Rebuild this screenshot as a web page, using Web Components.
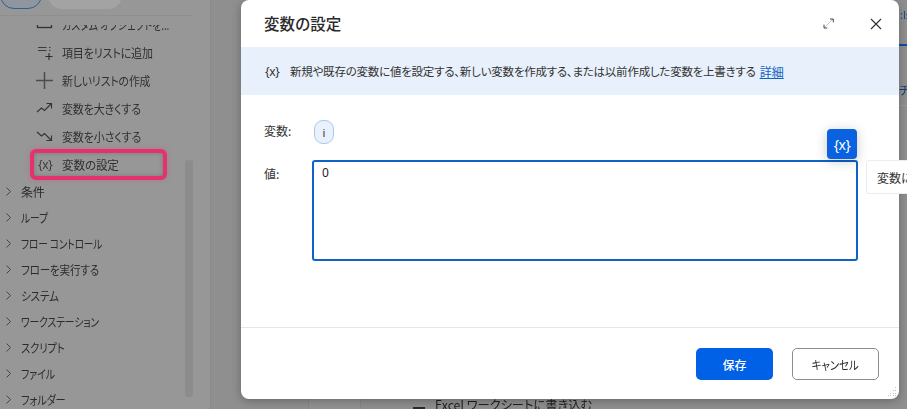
<!DOCTYPE html>
<html lang="ja">
<head>
<meta charset="utf-8">
<title>変数の設定</title>
<style>
html,body{margin:0;padding:0;width:907px;height:409px;overflow:hidden;background:#8f8f8f}
body{font-family:"Noto Sans CJK JP","Noto Sans",sans-serif;font-feature-settings:"palt";color:#2b2b2b}
</style>
</head>
<body>
<x-app>
  <x-sidebar slot="side">
    <x-action icon="obj" style="--sx:.84">カスタム オブジェクトを...</x-action>
    <x-action icon="add" style="--sx:.92">項目をリストに追加</x-action>
    <x-action icon="plus" style="--sx:.91">新しいリストの作成</x-action>
    <x-action icon="up" style="--sx:.92">変数を大きくする</x-action>
    <x-action icon="down" style="--sx:.92">変数を小さくする</x-action>
    <x-action icon="x" highlight style="--sx:.97">変数の設定</x-action>
    <x-category>条件</x-category>
    <x-category style="--sx:.82">ループ</x-category>
    <x-category style="--sx:.81">フロー コントロール</x-category>
    <x-category style="--sx:.88">フローを実行する</x-category>
    <x-category style="--sx:.88">システム</x-category>
    <x-category style="--sx:.82">ワークステーション</x-category>
    <x-category style="--sx:.86">スクリプト</x-category>
    <x-category style="--sx:.83">ファイル</x-category>
    <x-category style="--sx:.85">フォルダー</x-category>
  </x-sidebar>
  <x-canvas slot="main"></x-canvas>
  <x-dialog slot="dialog" heading="変数の設定">
    <x-banner slot="banner">新規や既存の変数に値を設定する、新しい変数を作成する、または以前作成した変数を上書きする</x-banner>
    <x-field slot="body" label="変数:" kind="chip"><x-chip>i</x-chip></x-field>
    <x-field slot="body" label="値:" kind="area"><x-area>0</x-area></x-field>
    <x-button slot="footer" primary>保存</x-button>
    <x-button slot="footer" style="--sx:.87">キャンセル</x-button>
  </x-dialog>
</x-app>
<script>
function def(name, css, html, init){
  customElements.define(name, class extends HTMLElement{
    connectedCallback(){
      if(this.shadowRoot) return;
      const r=this.attachShadow({mode:'open'});
      r.innerHTML='<style>'+css+'</style>'+(typeof html==='function'?html(this):html);
      if(init) init(this,r);
    }
  });
}
const ICONS={
 obj:'<rect x="1.5" y="1.5" width="14" height="10" fill="none" stroke="#333" stroke-width="1.3"/><path d="M4 4.5h3M4 7h3M9.500 4.500h3M9.500 7h3" stroke="#333" fill="none"/>',
 add:'<path d="M2 3.500h8.500M2 6.500h8.500M13 3.500h1.500M13 6.500h1.500" stroke="#3a3a3a" stroke-width="1.1" fill="none"/><path d="M13 9v7M9.500 12.500h7" stroke="#2b2b2b" stroke-width="1.1" fill="none"/>',
 plus:'<path d="M8.500 0v17M0 8.500h17" stroke="#4c4c4c" stroke-width="1.5" fill="none"/>',
 up:'<path d="M1 12l4.500-4 3 2.500L15 4M10.500 3.500h5v5" stroke="#333" stroke-width="1.1" fill="none"/>',
 down:'<path d="M1 4l4.500 4 3-2.500L15 12M10.500 12.500h5v-5" stroke="#333" stroke-width="1.1" fill="none"/>'
};
def('x-app',
 ':host{display:block;position:relative;width:907px;height:409px;overflow:hidden}.g{display:grid;grid-template-columns:211px 1fr;height:409px;filter:blur(.35px)}',
 '<div class="g"><slot name="side"></slot><slot name="main"></slot></div><slot name="dialog"></slot>');
def('x-sidebar',
 `:host{display:flex;flex-direction:column;height:409px;background:#979797;border-right:1px solid #8a8a8a;box-sizing:border-box;position:relative;overflow:hidden}
  .top{height:15px;flex:none;width:193px;border-bottom:1px solid #8f8f8f;display:flex;gap:6px;align-items:flex-end;box-sizing:content-box}
  .pill{height:25px;margin-top:-16px;border-radius:0 0 14px 14px;align-self:flex-start;box-sizing:border-box}
  .a{width:42px;border:1px solid #2e5f9e;background:#8f96a0}
  .b{width:74px;background:#a3a3a3;height:26px;margin-top:-17px}
  .list{margin-top:9px;height:384px;overflow:hidden;display:flex;flex-direction:column}
  .in{margin-top:-15px;display:flex;flex-direction:column}
  .sb{position:absolute;left:185px;top:160px;width:8px;height:237px;background:#8c8c8c;border-radius:3px}`,
 '<div class="top"><div class="pill a"></div><div class="pill b"></div></div><div class="list"><div class="in"><slot></slot></div></div><div class="sb"></div>');
def('x-action',
 `:host{display:flex;align-items:center;height:28px;padding-left:36px;font-size:12px;color:#303030;white-space:nowrap;position:relative;flex:none}
  .i{width:18px;height:17px;flex:none;margin-right:8px;display:flex;align-items:center;justify-content:flex-start}
  .i svg{display:block}
  .t{font-family:"Noto Sans","Liberation Sans",sans-serif;font-size:12px;letter-spacing:-.3px;margin-left:2px;color:#3c3c3c}
  .hl{position:absolute;left:30px;top:-1px;width:137px;height:31px;box-sizing:border-box;border:4px solid #e5316f;border-radius:6px;box-shadow:0 0 5px rgba(229,49,111,.35),inset 0 0 4px rgba(60,60,60,.35)}
  .lbl{display:inline-block;letter-spacing:-.2px;transform:scaleX(var(--sx,1));transform-origin:left center}`,
 h=>{
  const k=h.getAttribute('icon');
  const ic=k==='x'?'<span class="t">{x}</span>':'<svg width="17" height="17" viewBox="0 0 17 17">'+ICONS[k]+'</svg>';
  return '<span class="i">'+ic+'</span><span class="lbl"><slot></slot></span>'+(h.hasAttribute('highlight')?'<span class="hl"></span>':'');
 });
def('x-category',
 `:host{display:flex;align-items:center;height:26px;flex:none;font-size:12px;color:#2c2c2c;white-space:nowrap;padding-left:6px}
  svg{margin-right:10px;flex:none}.lbl{display:inline-block;letter-spacing:-.2px;transform:scaleX(var(--sx,1));transform-origin:left center}`,
 '<svg width="5" height="9" viewBox="0 0 5 9"><path d="M.5.500l4 4-4 4" fill="none" stroke="#3c3c3c" stroke-width=".9"/></svg><span class="lbl"><slot></slot></span>');
def('x-canvas',
 `:host{display:block;position:relative;height:409px;background:#8f8f8f;overflow:hidden}
  .col{position:absolute;left:97px;top:399px;width:51px;height:10px;background:#939393;border-left:1px solid #868686;border-right:1px solid #868686}
  .dash{position:absolute;left:202px;top:407px;width:12px;height:2px;background:#2a2a2a}
  .t{position:absolute;left:224px;top:396px;font-size:12.500px;line-height:18px;color:#1f1f1f;white-space:nowrap;transform:scaleX(.98);transform-origin:left}
  .ds{position:absolute;left:689px;top:7px;font:11px/16px "Noto Sans",sans-serif;color:#16478c}
  .ln{position:absolute;left:688px;top:44px;width:10px;height:1.500px;background:#0d4ea8}
  .ch{position:absolute;left:688px;top:81px;font-size:12.500px;line-height:18px;color:#17406f}
  .ln2{position:absolute;left:688px;top:105px;width:10px;height:1px;background:#9b9b9b}`,
 '<div class="col"></div><div class="dash"></div><div class="t">Excel ワークシートに書き込む</div><div class="ds">:ls</div><div class="ln"></div><div class="ch">チ</div><div class="ln2"></div>');
def('x-dialog',
 `:host{position:absolute;left:241px;top:0;width:658px;height:399px;background:#fff;border-radius:8px;box-shadow:0 2px 10px rgba(0,0,0,.28);display:flex;flex-direction:column;overflow:visible}
  header{height:47px;flex:none;display:flex;align-items:center;padding:0 0 2px 23px;box-sizing:border-box;position:relative}
  h1{margin:0;font-size:15.500px;font-weight:500;color:#2a2a2a;letter-spacing:.1px;line-height:20px}
  .ex{position:absolute;left:582px;top:18px}
  .cl{position:absolute;left:629px;top:18px}
  main{flex:1;display:flex;flex-direction:column;padding-top:25px;min-height:0}
  footer{flex:none;border-top:1px solid #e6e6e6;display:flex;justify-content:flex-end;align-items:flex-start;gap:19px;padding:20px 20px 0 0;box-sizing:border-box;height:72px}
  .grip{position:absolute;right:2px;bottom:2px}`,
 h=>`<header><h1>${h.getAttribute('heading')}</h1>
   <svg class="ex" width="11" height="11" viewBox="0 0 11 11"><path d="M1 10l9-9" stroke="#b5b5b5" stroke-width=".8"/><path d="M7 1h3.300v3.300M1 6.700V10h3.300" fill="none" stroke="#444" stroke-width="1"/></svg>
   <svg class="cl" width="12" height="12" viewBox="0 0 12 12"><path d="M1 1l10 10M11 1L1 11" stroke="#2e2e2e" stroke-width="1.100"/></svg>
   </header><slot name="banner"></slot><main><slot name="body"></slot></main><footer><slot name="footer"></slot></footer>
   <svg class="grip" width="10" height="10" viewBox="0 0 10 10"><path d="M8 0h1v1H8zM6 3h1v1H6zM8 3h1v1H8zM3 6h1v1H3zM6 6h1v1H6zM8 6h1v1H8zM1 8h1v1H1zM3 8h1v1H3zM6 8h1v1H6zM8 8h1v1H8z" fill="#c4c4c4"/></svg>`);
def('x-banner',
 `:host{display:flex;align-items:center;height:48px;flex:none;background:#e8f0fb;padding-left:24px;box-sizing:border-box;font-size:11.500px;letter-spacing:-.23px;color:#333;white-space:nowrap}
  .i{width:25px;flex:none;font:12px "Noto Sans",sans-serif;color:#333;letter-spacing:-.3px}
  a{color:#0f62c4;text-decoration:underline;margin-left:4px;font-size:12px;letter-spacing:0}`,
 '<span class="i">{x}</span><span><slot></slot></span><a>詳細</a>');
def('x-field',
 `:host{display:flex;position:relative;padding-left:23px;font-size:12px;color:#333}
  .l{width:48px;flex:none;line-height:18px}
  :host([kind=chip]){height:40px}:host([kind=chip]) .l{padding-top:2px}
  :host([kind=area]) .l{padding-top:5px}`,
 h=>`<span class="l">${h.getAttribute('label')}</span><slot></slot>`);
def('x-chip',
 `:host{display:flex;align-items:center;justify-content:center;width:20px;height:24px;margin-left:2px;box-sizing:border-box;background:#e8f1fc;border:1px solid #a9c9ee;border-radius:9px;font:11px "Noto Sans",sans-serif;color:#333}`,
 '<slot></slot>');
def('x-area',
 `:host{display:block;position:relative;width:546px;height:101px;box-sizing:border-box;border:2px solid #0f62c8;border-radius:3px;padding:2px 8px;font:12px/18px "Noto Sans",sans-serif;color:#222;background:#fff}
  .var{position:absolute;right:-1px;top:-33px;width:30px;height:30px;border-radius:4px;background:#0b62e0;color:#fff;display:flex;align-items:center;justify-content:center;font:14px "Noto Sans",sans-serif;letter-spacing:-.5px;box-shadow:0 2px 12px rgba(0,0,0,.22)}
  .tip{position:absolute;left:552px;top:-2px;width:80px;height:34px;background:#fff;border:1px solid #ececec;border-radius:3px;box-sizing:border-box;padding-left:10px;display:flex;align-items:center;font:12px "Noto Sans CJK JP",sans-serif;font-feature-settings:"palt";color:#333;white-space:nowrap}`,
 '<slot></slot><div class="var">{x}</div><div class="tip">変数に値を設定する</div>');
def('x-button',
 `:host{display:flex;align-items:center;justify-content:center;height:32px;box-sizing:border-box;border-radius:5px;font-size:12px;flex:none;width:87px;background:#fff;border:1px solid #8c8c8c;color:#2a2a2a}
  :host([primary]){width:77px;background:#0060e6;border:none;color:#fff;font-weight:500}
  span{display:inline-block;transform:scaleX(var(--sx,1))}`,
 '<span><slot></slot></span>');
</script>
</body>
</html>
